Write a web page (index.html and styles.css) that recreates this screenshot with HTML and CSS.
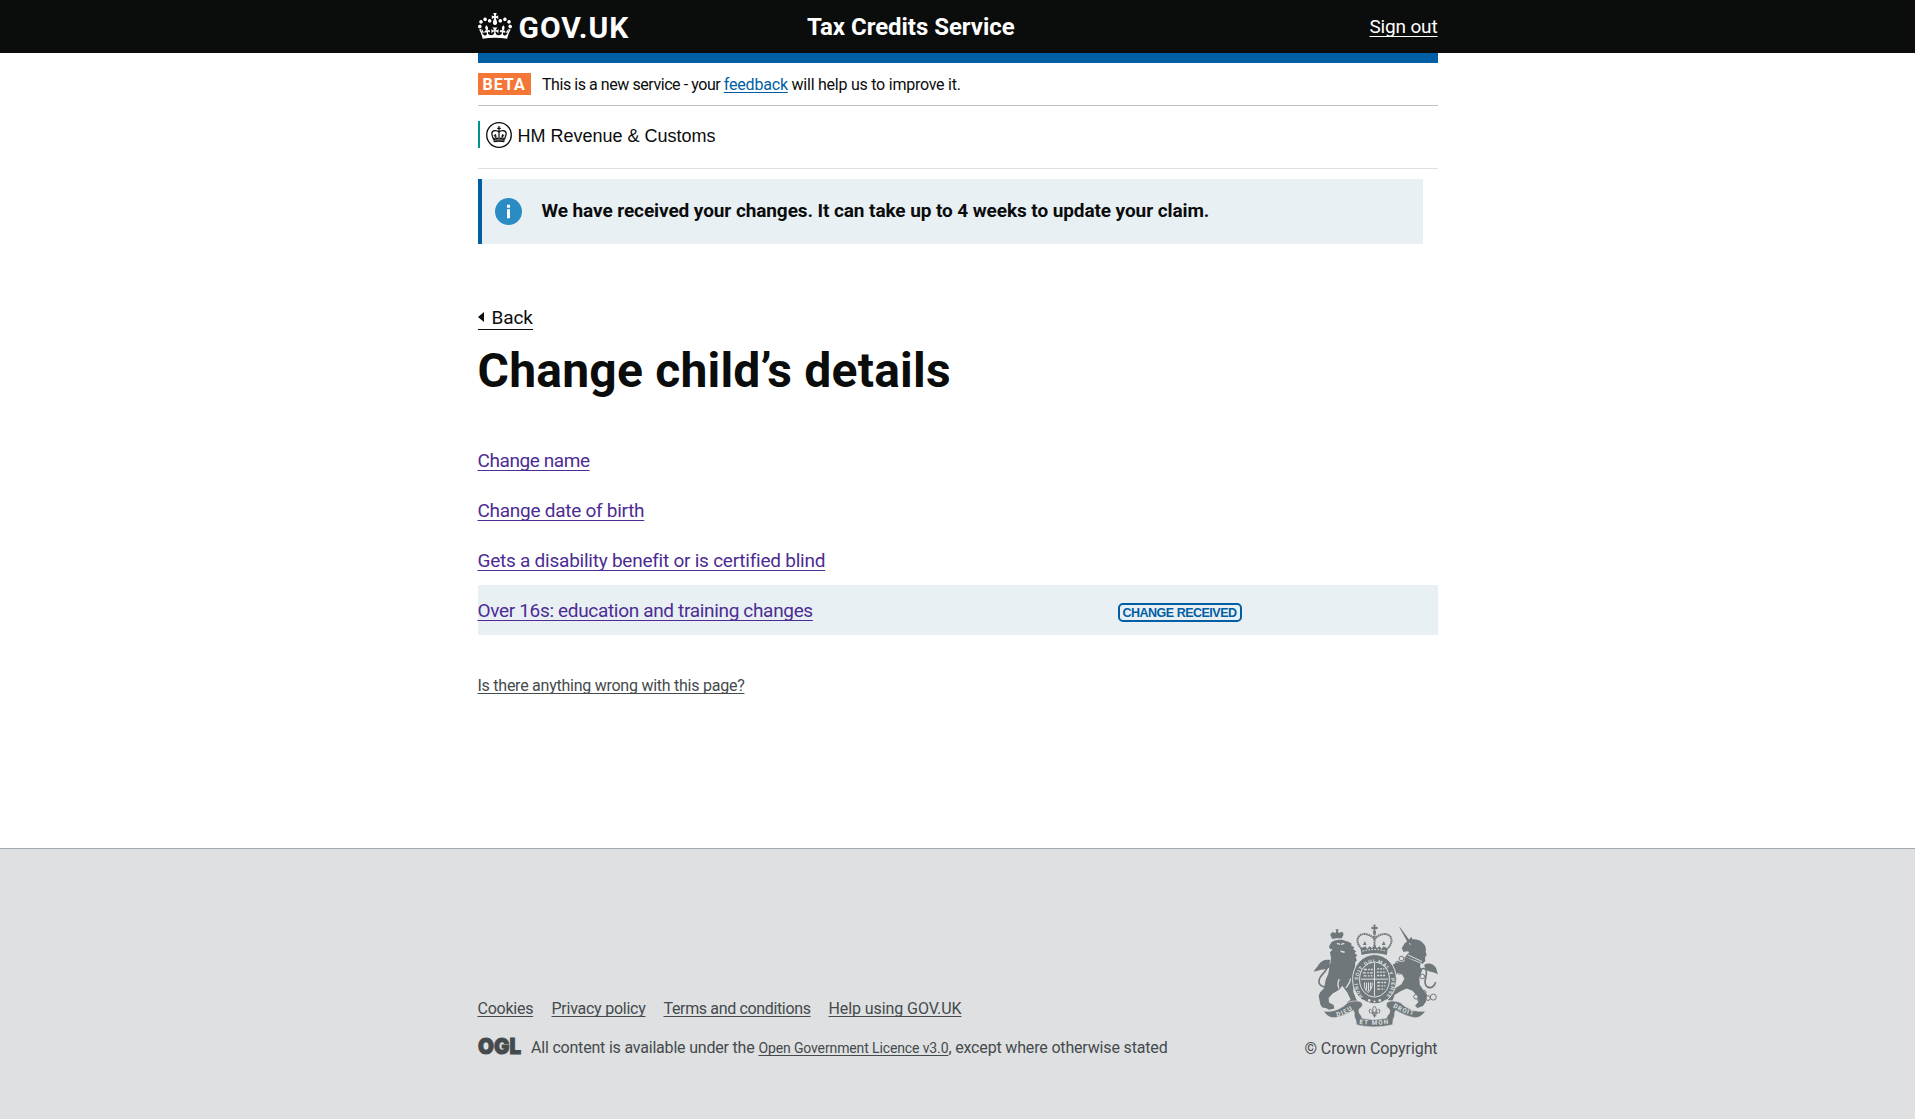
FILE: index.html
```html
<!DOCTYPE html>
<html lang="en">
<head>
<meta charset="utf-8">
<title>Change child’s details</title>
<link rel="stylesheet" href="styles.css">
</head>
<body>
<svg class="symbols" aria-hidden="true">
  <symbol id="crown" viewBox="0 0 132 97" preserveAspectRatio="none">
    <path fill="currentColor" fill-rule="evenodd" d="M25 30.2c3.5 1.5 7.7-.2 9.1-3.7 1.5-3.6-.2-7.8-3.9-9.2-3.6-1.4-7.6.3-9.1 3.9-1.4 3.5.3 7.5 3.9 9zM9 39.5c3.6 1.5 7.8-.2 9.2-3.7 1.5-3.6-.2-7.8-3.9-9.1-3.6-1.5-7.6.2-9.1 3.8-1.4 3.5.3 7.5 3.8 9zM4.4 57.2c3.5 1.5 7.7-.2 9.1-3.8 1.5-3.6-.2-7.7-3.9-9.1-3.5-1.5-7.6.3-9.1 3.8-1.4 3.5.3 7.6 3.9 9.1zm38.3-21.4c3.5 1.5 7.7-.2 9.1-3.8 1.5-3.6-.2-7.7-3.9-9.1-3.6-1.5-7.6.3-9.1 3.8-1.3 3.6.4 7.7 3.9 9.1zm64.4-5.6c-3.6 1.5-7.8-.2-9.1-3.7-1.5-3.6.2-7.8 3.8-9.2 3.6-1.4 7.7.3 9.2 3.9 1.3 3.5-.4 7.5-3.9 9zm15.9 9.3c-3.6 1.5-7.7-.2-9.1-3.7-1.5-3.6.2-7.8 3.7-9.1 3.6-1.5 7.7.2 9.2 3.8 1.5 3.5-.3 7.5-3.8 9zm4.7 17.7c-3.6 1.5-7.8-.2-9.2-3.8-1.5-3.6.2-7.7 3.9-9.1 3.6-1.5 7.7.3 9.2 3.8 1.3 3.5-.4 7.6-3.9 9.1zM89.3 35.8c-3.6 1.5-7.8-.2-9.2-3.8-1.4-3.6.2-7.7 3.9-9.1 3.6-1.5 7.7.3 9.2 3.8 1.4 3.6-.3 7.7-3.9 9.1zM69.7 17.7l8.9 4.7V9.3l-8.9 2.8c-.2-.3-.5-.6-.9-.9L72.4 0H59.6l3.5 11.2c-.3.3-.6.5-.9.9l-8.8-2.8v13.1l8.8-4.7c.3.3.6.7.9.9l-5 15.4v.1c-.2.8-.4 1.6-.4 2.4 0 4.1 3.1 7.5 7 8.1h.2c.3 0 .7.1 1 .1.4 0 .7 0 1-.1h.2c4-.6 7.1-4.1 7.1-8.1 0-.8-.1-1.7-.4-2.4V34l-5.1-15.4c.4-.2.7-.6 1-.9zM66 92.8c16.9 0 32.8 1.1 47.1 3.2 4-16.9 8.9-26.7 14-33.5l-9.6-3.4c1 4.9 1.1 7.2 0 10.2-1.5-1.4-3-4.3-4.2-8.7L108.6 76c2.8-2 5-3.2 7.5-3.3-4.4 9.4-10 11.9-13.6 11.2-4.3-.8-6.3-4.6-5.6-7.9 1-4.7 5.7-5.9 8-.5 4.3-8.7-3-11.4-7.6-8.8 7.1-7.2 7.9-13.5 2.1-21.1-8 6.1-8.1 12.3-4.5 20.8-4.7-5.4-12.1-2.5-9.5 6.2 3.4-5.2 7.9-2 7.2 3.1-.6 4.3-6.4 7.8-13.5 7.2-10.3-.9-10.9-8-11.2-13.8 2.5-.5 7.1 1.8 11 7.3L80.2 60c-4.1 4.4-8 5.3-12.3 5.4 1.4-4.4 8-11.6 8-11.6H55.5s6.4 7.2 7.9 11.6c-4.2-.1-8-1-12.3-5.4l1.4 16.4c3.9-5.5 8.5-7.7 10.9-7.3-.3 5.8-.9 12.8-11.1 13.8-7.2.6-12.9-2.9-13.5-7.2-.7-5 3.8-8.3 7.1-3.1 2.7-8.7-4.6-11.6-9.4-6.2 3.7-8.5 3.6-14.7-4.6-20.8-5.8 7.6-5 13.9 2.2 21.1-4.7-2.6-11.9.1-7.7 8.8 2.3-5.5 7.1-4.2 8.1.5.7 3.3-1.3 7.1-5.7 7.9-3.5.7-9-1.8-13.5-11.2 2.5.1 4.7 1.3 7.5 3.3l-4.7-15.4c-1.2 4.4-2.7 7.2-4.3 8.7-1.1-3-.9-5.3 0-10.2l-9.5 3.4c5 6.9 9.9 16.7 14 33.5 14.8-2.1 30.8-3.2 47.7-3.2z"/>
  </symbol>
</svg>

<header class="header">
  <div class="width header-row">
    <div class="logo">
      <svg class="logo-crown"><use href="#crown"/></svg>
      <span class="logo-text">GOV.UK</span>
    </div>
    <div class="service">Tax Credits Service</div>
    <a class="signout" href="#">Sign out</a>
  </div>
</header>

<main class="width">
  <div class="bar"></div>
  <div class="phase">
    <strong class="beta">BETA</strong>
    <span class="phase-text"><span class="phase-a">This is a new service - your </span><a class="feedback" href="#">feedback</a><span class="phase-b"> will help us to improve it.</span></span>
  </div>

  <div class="org">
    <div class="org-name">
      <svg class="org-crest" viewBox="0 0 26 26">
        <circle cx="13" cy="13" r="12.3" fill="none" stroke="#0b0c0c" stroke-width="1.3"/>
        <g fill="none" stroke="#0b0c0c" stroke-width="1.2">
          <path d="M13 4v12M11.2 6.3h3.6M13 10.2C11.500 8 6 7.600 5.800 11.500c0 2 1.200 3.500 1.700 6M13 10.200c1.500-2.200 7-2.600 7.200 1.300 0 2-1.200 3.500-1.700 6"/>
          <path d="M9.300 12v4M16.700 12v4M7.800 13.600l3 .6M18.200 13.600l-3 .6" stroke-width="1"/>
        </g>
        <path fill="#0b0c0c" d="M7.200 15.500l2 1 1.700-1.300 2.100 1.200 2.100-1.200 1.700 1.300 2-1-.5 4.700c-3-.7-7.600-.7-10.600 0z"/>
        <path fill="none" stroke="#fff" stroke-width=".6" d="M8.500 18.300c3-.6 6-.6 9 0"/>
      </svg>
      <span>HM Revenue &amp; Customs</span>
    </div>
  </div>

  <div class="notice">
    <svg class="notice-icon" viewBox="0 0 27 27">
      <circle cx="13.500" cy="13.500" r="13.500" fill="#2b8cc4"/>
      <path fill="#fff" d="M12 6.800h3v3h-3zM12 11.300h3v9h-3z"/>
    </svg>
    <strong class="notice-text">We have received your changes. It can take up to 4 weeks to update your claim.</strong>
  </div>

  <a class="back" href="#"><svg class="back-arrow" viewBox="0 0 6 10"><path fill="#0b0c0c" d="M0 5 6 0v10z"/></svg>Back</a>
  <h1 class="title">Change child’s details</h1>

  <ul class="tasks">
    <li class="task"><a class="task-name" href="#">Change name</a></li>
    <li class="task"><a class="task-birth" href="#">Change date of birth</a></li>
    <li class="task"><a class="task-benefit" href="#">Gets a disability benefit or is certified blind</a></li>
    <li class="task task-done"><a class="task-education" href="#">Over 16s: education and training changes</a><span class="badge">CHANGE RECEIVED</span></li>
  </ul>

  <a class="problem" href="#">Is there anything wrong with this page?</a>
</main>

<footer class="footer">
  <div class="width footer-row">
    <div class="footer-main">
      <nav class="footer-links">
        <a class="f-cookies" href="#">Cookies</a>
        <a class="f-privacy" href="#">Privacy policy</a>
        <a class="f-terms" href="#">Terms and conditions</a>
        <a class="f-help" href="#">Help using GOV.UK</a>
      </nav>
      <div class="licence">
        <svg class="ogl" viewBox="0 0 43 18"><text x="0" y="16.500" textLength="43" lengthAdjust="spacingAndGlyphs">OGL</text></svg>
        <span class="licence-text"><span class="lic-a">All content is available under the</span> <a class="lic-link" href="#">Open Government Licence v3.0</a><span class="lic-b">, except where otherwise stated</span></span>
      </div>
    </div>
    <div class="copyright">
      <svg class="arms" viewBox="67 40 376 310" fill="#6f777b">
        <!-- lion: crown, head and mane, body, legs, tail -->
        <path d="M125 85c-3-7-9-13-3-18 4-4 9-2 12 1l3-6-2-6h9l-2 6 3 6c4-4 10-5 13-1 3 6-3 11-5 17-9-2-19-2-28 1z"/>
        <path d="M122 96c5-7 30-12 42-5 8 1 14 4 19 8l-1 6 9 5-3 6 9 6-5 5 8 7-5 6 4 9-5 6-1 18-3 12 2 12c4 12 0 20-3 28l-1 19 7 17 6 14-9 8-17-2-6-5 11-8-9-20-16-22c-7 12-18 18-29 23l-12 14 1 13 14 8 2 10-15 4-11-5-10-2-6-9-5-26 4-10 12-13 5-25 8-18c2-18 8-34 8-49l-3-15 8-10-8-1-3-7z"/>
        <path fill="none" stroke="#6f777b" stroke-width="5" d="M117 229c-22 5-36-7-31-23 4-15 24-23 26-42"/>
        <path d="M69 184c5-11 10-13 15-22 8-13 23-17 35-13-4 8-1 13 0 19-4 6-12 7-21 9-10 1-17 4-29 7z"/>
        <path fill="none" stroke="#dee0e2" stroke-width="4" d="M139 98l9 3M151 101l10-3M150 122l12 3M180 204c-2 16-8 20-14 28M146 206c-6 12-5 20-1 28"/>
        <!-- crown -->
        <path d="M213 133l-3-19 15-7 5 8 7-8 8 6 7-12 7 12 8-6 7 8 5-8 13 7-3 19c-23-7-52-7-76 0z"/>
        <g fill="none" stroke="#6f777b" stroke-width="6" stroke-dasharray="5 1.500">
          <path d="M213 114c-13-12-16-28-7-38 12-12 38-4 46 11 8-15 34-23 46-11 9 10 6 26-7 38M252 62v50"/>
        </g>
        <path d="M248 42h8l-2 7 7-1v8l-7-1 3 14h-10l3-14-7 1v-8l7 1zM223 91l5 12h-11zM280 91l5 12h-11z"/>
        <path fill="none" stroke="#dee0e2" stroke-width="3" stroke-dasharray="5 4" d="M216 122c24-7 48-7 72 0"/>
        <!-- unicorn: horn, head, chained collar, body, tail -->
        <path d="M326 48l4 3 28 39-7 4zM334 112l9-14 12-10 8-10 3 8c18-3 39 10 41 29l-1 9 3 9-5 8 1 10-8 9c-16-10-34-15-53-21l13-15-7-2-11 2z"/>
        <path fill="none" stroke="#dee0e2" stroke-width="3" d="M356 99l5 2M353 133l42 20"/>
        <path d="M342 139c16 5 32 12 49 20l-2 8 6 14-8 21 1 21 12 17 10 12-3 21-9 14-17 6-7-7 11-12-4-17-15-16-17-7-17 8-19 11-7 18-15-2-8-9 13-4 16-21 21-14 9-16-7-13-13-6-8 11 7 10-10 1-7-12-8-8 4-8 8-6-5-6 8-8 13-5 18-3z"/>
        <path fill="none" stroke="#6f777b" stroke-width="5" d="M377 191c12-18 29-23 31-9 3 15-13 37 4 48 11 5 21-3 24-15"/>
        <path d="M402 163c13-9 29-2 35 9l6 19c-9-4-15-6-25-8-10-3-16-8-16-20z"/>
        <g fill="none" stroke="#6f777b" stroke-width="3">
          <circle cx="377" cy="259" r="7"/><circle cx="389" cy="268" r="7"/><circle cx="413" cy="263" r="7"/><circle cx="429" cy="260" r="9"/><circle cx="333" cy="144" r="7"/><circle cx="322" cy="158" r="6"/><circle cx="327" cy="185" r="6"/><circle cx="396" cy="198" r="7"/><circle cx="401" cy="246" r="6"/>
        </g>
        <!-- garter and shield -->
        <ellipse cx="252" cy="207" rx="66" ry="75" stroke="#dee0e2" stroke-width="3"/>
        <ellipse cx="252" cy="207" rx="45" ry="53" fill="none" stroke="#dee0e2" stroke-width="3"/>
        <path id="garter" fill="none" d="M222 263a50 59 0 1 1 60 0"/>
        <text class="motto"><textPath href="#garter" startOffset="6" textLength="262">HONI SOIT QUI MAL Y PENSE</textPath></text>
        <g fill="none" stroke="#dee0e2" stroke-width="3">
          <path d="M252 157v100M211 206h82"/>
          <path stroke-width="4" stroke-dasharray="9 4 5 3" d="M220 177h27M217 187h30M219 196h27M260 216h27M260 226h25M260 236h22"/>
          <path stroke-width="4" stroke-dasharray="6 3" d="M260 175h22M259 185h28M260 195h27"/>
          <path d="M222 216c-2 15 3 24 11 30 9-7 13-16 12-30M228 216v22M234 216v26M240 216v22"/>
        </g>
        <g fill="#dee0e2"><circle cx="236" cy="270" r="4"/><circle cx="252" cy="273" r="3"/><circle cx="268" cy="270" r="4"/></g>
        <!-- scroll -->
        <path stroke="#dee0e2" stroke-width="2" d="M98 302c33 4 55-8 73-25 16-7 43-9 45 5 1 10-13 10-11 21 2 12 9 9 9 20 24 6 50 6 75 0 0-11 8-8 9-20 1-11-12-11-11-21 2-14 29-12 43-5 19 17 41 29 76 25-12 17-25 24-43 18-20-5-34-14-47-20-7 10 0 14-6 23-3 8-3 13-3 20-38 9-75 9-110 0 0-7 0-12-4-20-5-9 2-13-5-23-14 6-28 15-46 20-19 6-33-1-44-18z"/>
        <path fill="#dee0e2" d="M215 282c4-5 2-12-1-16l18 9c13 5 30 5 42 0l15-9c-2 5-3 11 0 16-10 13-2 23 0 37-24 5-50 5-73 0 2-14 9-26-1-37z"/>
        <path fill="none" stroke="#6f777b" stroke-width="3" d="M252 287c-9 9-5 16 0 22 5-6 9-13 0-22zM239 309c-8-13 2-17 7-5l3 14M265 309c8-13-2-17-7-5l-3 14M241 308h22M252 309v12"/>
        <path id="dieu" fill="none" d="M139 319q27-6 52-26"/>
        <path id="mon" fill="none" d="M206 340q46 7 94-1"/>
        <path id="droit" fill="none" d="M307 290q30 19 70 27"/>
        <g class="ribbon">
          <text><textPath href="#dieu" textLength="52">DIEU</textPath></text>
          <text><textPath href="#mon" textLength="88">ET MON</textPath></text>
          <text><textPath href="#droit" textLength="66">DROIT</textPath></text>
        </g>
      </svg>
      <span class="copy-text">© Crown Copyright</span>
    </div>
  </div>
</footer>
</body>
</html>
```
FILE: styles.css
```css
* { box-sizing: border-box; }
body {
  margin: 0;
  min-height: 1119px;
  display: flex;
  flex-direction: column;
  background: #fff;
  color: #0b0c0c;
  font-family: Roboto, "Liberation Sans", sans-serif;
  font-size: 19px;
}
svg { display: block; flex: none; }
a {
  text-decoration: underline;
  text-decoration-thickness: 1px;
  text-underline-offset: 2px;
  text-decoration-skip-ink: none;
}
.symbols { display: none; }
.width { width: 960px; margin: 0 auto; }

.header { height: 53px; background: #0b0c0c; color: #fff; }
.header-row {
  display: grid;
  grid-template-columns: 329.5px 1fr auto;
  line-height: 53px;
}
.logo { display: flex; align-items: flex-start; }
.logo-crown { width: 34px; height: 26px; margin: 13px 6.500px 0 0.500px; }
.logo-text { font-size: 30px; font-weight: 700; letter-spacing: 1px; padding-top: 1px; line-height: 53px; }
.service { font-size: 24px; font-weight: 700; letter-spacing: -0.04px; padding-top: 1px; }
.signout { color: #fff; letter-spacing: -0.16px; text-underline-offset: 3px; }

.bar { height: 10px; background: #005ea5; }
.phase {
  height: 43px;
  display: flex;
  align-items: center;
  border-bottom: 1px solid #bfc1c3;
  font-size: 16px;
}
.beta {
  width: 53px;
  height: 22px;
  margin-right: 11.500px;
  padding-left: 5px;
  background: #f47738;
  color: #fff;
  line-height: 23px;
  letter-spacing: 1px;
}
.phase-text { white-space: pre; line-height: 22px; padding-top: 2px; }
.phase-a { letter-spacing: -0.44px; }
.feedback { color: #005ea5; letter-spacing: -0.19px; }
.phase-b { letter-spacing: -0.24px; }

.org { height: 63px; padding-top: 15px; border-bottom: 1px solid #dee0e2; }
.org-name {
  height: 27px;
  display: flex;
  align-items: center;
  border-left: 2px solid #00948c;
  padding-left: 6px;
  font: 18px/25px "Liberation Sans", Arial, sans-serif;
}
.org-name span { padding-top: 3px; }
.org-crest { width: 26px; height: 26px; margin-right: 6px; }

.notice {
  width: 945px;
  height: 65px;
  margin-top: 10px;
  display: flex;
  align-items: center;
  background: #e8f0f4;
  border-left: 4px solid #005ea5;
  padding-left: 13px;
}
.notice-icon { width: 27px; height: 27px; margin-right: 20px; }
.notice-text { letter-spacing: -0.09px; padding-bottom: 2px; }

.back {
  display: flex;
  align-items: center;
  width: 55px;
  margin-top: 61px;
  padding-top: 1px;
  line-height: 23px;
  height: 25px;
  color: #0b0c0c;
  text-decoration: none;
  border-bottom: 1px solid #0b0c0c;
  letter-spacing: -0.1px;
}
.back-arrow { width: 6px; height: 10px; margin: 0 7.500px 2px 0.500px; }
.title {
  margin: 16px 0 39px;
  font-size: 48px;
  line-height: 50px;
  font-weight: 700;
  letter-spacing: 0.22px;
}

.tasks { list-style: none; margin: 0; padding: 0; }
.task {
  height: 50px;
  display: grid;
  grid-template-columns: 640px 1fr;
  align-items: center;
  justify-items: start;
  padding-top: 1px;
}
.task a { color: #4c2c92; text-underline-offset: 3px; }
.task-done { background: #e8f0f4; }
.task-name { letter-spacing: -0.42px; }
.task-birth { letter-spacing: -0.27px; }
.task-benefit { letter-spacing: -0.24px; }
.task-education { letter-spacing: -0.33px; }
.badge {
  width: 124px;
  height: 19px;
  margin-top: 4px;
  border: 2px solid #005ea5;
  border-radius: 5px;
  padding-left: 3px;
  color: #005ea5;
  font: 700 12.500px/16px "Liberation Sans", Arial, sans-serif;
  letter-spacing: -0.5px;
  white-space: nowrap;
}
.problem {
  display: block;
  width: max-content;
  margin-top: 41px;
  font-size: 16px;
  line-height: 20px;
  letter-spacing: -0.25px;
  color: #454a4c;
}

.footer {
  height: 271px;
  margin-top: auto;
  padding-top: 75px;
  background: #dee0e2;
  border-top: 1px solid #a1acb2;
  color: #454a4c;
  font-size: 16px;
  line-height: 20px;
}
.footer a { color: #454a4c; }
.footer-row { display: flex; justify-content: space-between; align-items: flex-end; }
.footer-links {
  display: grid;
  grid-template-columns: 74px 112px 165px auto;
  margin-bottom: 19px;
}
.footer-main { padding-bottom: 1px; }
.f-cookies { letter-spacing: -0.25px; }
.f-privacy { letter-spacing: -0.25px; }
.f-terms { letter-spacing: -0.35px; }
.f-help { letter-spacing: -0.08px; }
.licence { display: flex; align-items: flex-start; }
.ogl {
  width: 43px;
  height: 18px;
  margin: -1px 10px 0 0.500px;
  overflow: visible;
  fill: #454a4c;
  stroke: #454a4c;
  stroke-width: 1;
  font: 900 22px Inter, sans-serif;
}
.lic-a { letter-spacing: -0.2px; }
.lic-link { font-size: 14px; letter-spacing: -0.125px; }
.lic-b { letter-spacing: -0.165px; }
.copyright { display: flex; flex-direction: column; align-items: flex-end; }
.arms { width: 125px; height: 103px; margin-bottom: 12px; }
.motto { font: 700 15px Roboto, sans-serif; fill: #dee0e2; }
.ribbon { font: 700 19px Roboto, sans-serif; fill: #dee0e2; }
.copy-text { letter-spacing: -0.09px; }
```
